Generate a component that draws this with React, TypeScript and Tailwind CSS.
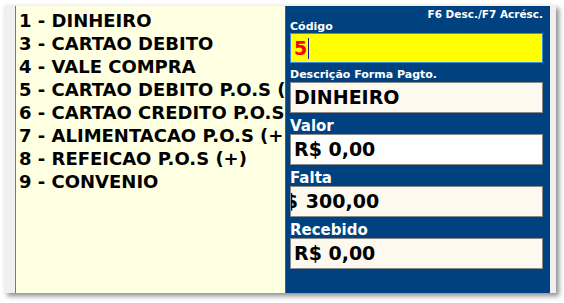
import React from 'react';

const opcoes = [
  '1 - DINHEIRO',
  '3 - CARTAO DEBITO',
  '4 - VALE COMPRA',
  '5 - CARTAO DEBITO P.O.S (+)',
  '6 - CARTAO CREDITO P.O.S (+)',
  '7 - ALIMENTACAO P.O.S (+)',
  '8 - REFEICAO P.O.S (+)',
  '9 - CONVENIO',
];

const font = { fontFamily: '"DejaVu Sans", Verdana, sans-serif' };

const App: React.FC = () => {
  return (
    <div className="w-[564px] h-[303px] bg-white overflow-hidden" style={font}>
      {/* Window frame */}
      <div className="ml-[4px] mt-[5px] w-[552px] h-[288px] bg-[#f0f0f0] pt-[1px] pl-[11px] pr-[6px] flex shadow-[3px_3px_5px_rgba(0,0,0,0.45)]">
        {/* Payment list */}
        <div className="w-[271px] h-full bg-[#ffffe1] border-l border-[#7a7a7a] border-r border-r-[#5a5a5a] pl-[3px] pt-[3px] overflow-hidden">
          {opcoes.map((o) => (
            <div key={o} className="text-[18px] leading-[23px] font-bold text-black whitespace-nowrap">
              {o}
            </div>
          ))}
        </div>

        {/* Form panel */}
        <div className="flex-1 h-full bg-[#00427f] pl-[4px] pr-[7px] pt-[1px] flex flex-col">
          <div className="text-right text-white font-bold text-[10.5px] leading-[13px] pt-[1px]">F6 Desc./F7 Acrésc.</div>
          <div className="text-white font-bold text-[11px] leading-[12px] h-[12px]">Código</div>
          <div className="h-[30px] bg-[#ffff00] border border-[#3c8ddc] flex items-center pl-[3px]">
            <span className="text-[#ff0000] font-bold text-[19px] leading-none">5</span>
            <span className="w-[1px] h-[21px] bg-[#1a1aa8] ml-[1px]" />
          </div>

          <div className="h-[19px] flex items-end text-white font-bold text-[11px] leading-[12px] pb-[1px]">Descrição Forma Pagto.</div>
          <div className="h-[31px] bg-[#fdf9ef] border border-[#8a8a8a] flex items-center pl-[3px] font-bold text-[19px] leading-none text-black">DINHEIRO</div>

          <div className="h-[21px] flex items-end text-white font-bold text-[15px] leading-[16px]">Valor</div>
          <div className="h-[31px] bg-white border border-[#8a8a8a] flex items-center pl-[3px] font-bold text-[19px] leading-none text-black">R$ 0,00</div>

          <div className="h-[21px] flex items-end text-white font-bold text-[15px] leading-[16px]">Falta</div>
          <div className="h-[31px] bg-[#fdf9ef] border border-[#8a8a8a] flex items-center overflow-hidden font-bold text-[19px] leading-none text-black whitespace-nowrap">
            <span className="-ml-[21px] shrink-0">R$</span>
            <span className="ml-[8px] shrink-0">300,00</span>
          </div>

          <div className="h-[21px] flex items-end text-white font-bold text-[15px] leading-[16px]">Recebido</div>
          <div className="h-[31px] bg-[#fdf9ef] border border-[#8a8a8a] flex items-center pl-[3px] font-bold text-[19px] leading-none text-black">R$ 0,00</div>
        </div>
      </div>
    </div>
  );
};

export default App;
